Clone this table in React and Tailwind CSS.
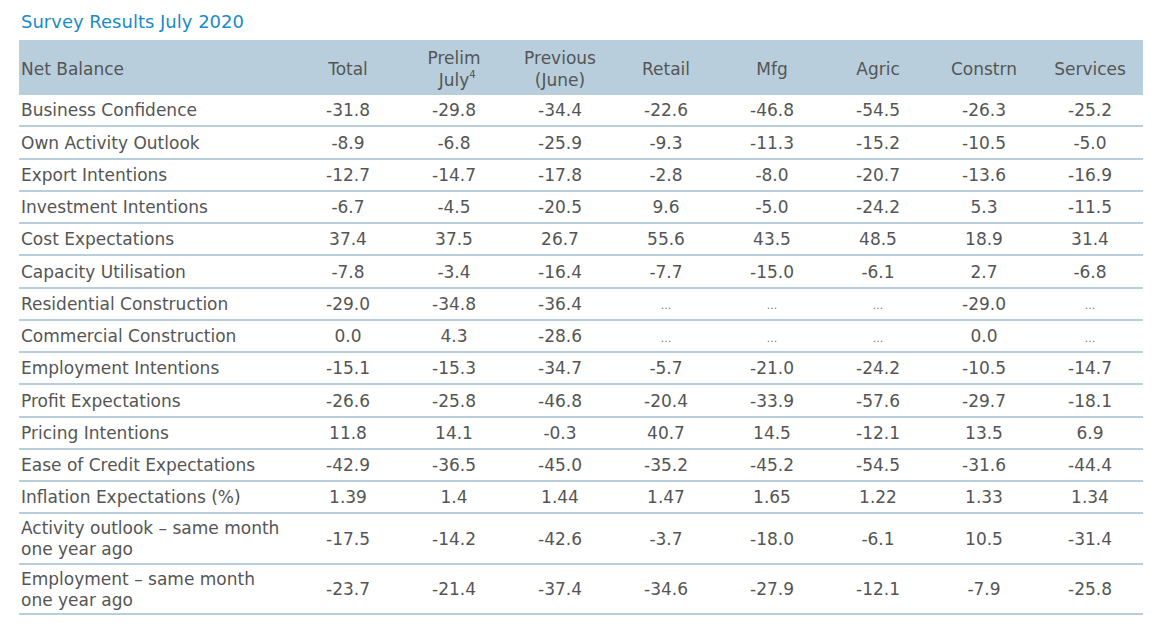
const cols = ['Total', 'Prelim', 'Previous', 'Retail', 'Mfg', 'Agric', 'Constrn', 'Services'];

const rows = [
  ['Business Confidence', '-31.8', '-29.8', '-34.4', '-22.6', '-46.8', '-54.5', '-26.3', '-25.2'],
  ['Own Activity Outlook', '-8.9', '-6.8', '-25.9', '-9.3', '-11.3', '-15.2', '-10.5', '-5.0'],
  ['Export Intentions', '-12.7', '-14.7', '-17.8', '-2.8', '-8.0', '-20.7', '-13.6', '-16.9'],
  ['Investment Intentions', '-6.7', '-4.5', '-20.5', '9.6', '-5.0', '-24.2', '5.3', '-11.5'],
  ['Cost Expectations', '37.4', '37.5', '26.7', '55.6', '43.5', '48.5', '18.9', '31.4'],
  ['Capacity Utilisation', '-7.8', '-3.4', '-16.4', '-7.7', '-15.0', '-6.1', '2.7', '-6.8'],
  ['Residential Construction', '-29.0', '-34.8', '-36.4', '...', '...', '...', '-29.0', '...'],
  ['Commercial Construction', '0.0', '4.3', '-28.6', '...', '...', '...', '0.0', '...'],
  ['Employment Intentions', '-15.1', '-15.3', '-34.7', '-5.7', '-21.0', '-24.2', '-10.5', '-14.7'],
  ['Profit Expectations', '-26.6', '-25.8', '-46.8', '-20.4', '-33.9', '-57.6', '-29.7', '-18.1'],
  ['Pricing Intentions', '11.8', '14.1', '-0.3', '40.7', '14.5', '-12.1', '13.5', '6.9'],
  ['Ease of Credit Expectations', '-42.9', '-36.5', '-45.0', '-35.2', '-45.2', '-54.5', '-31.6', '-44.4'],
  ['Inflation Expectations (%)', '1.39', '1.4', '1.44', '1.47', '1.65', '1.22', '1.33', '1.34'],
];

const tallRows = [
  ['Activity outlook \u2013 same month', 'one year ago', '-17.5', '-14.2', '-42.6', '-3.7', '-18.0', '-6.1', '10.5', '-31.4'],
  ['Employment \u2013 same month', 'one year ago', '-23.7', '-21.4', '-37.4', '-34.6', '-27.9', '-12.1', '-7.9', '-25.8'],
];

function Cell({ value }) {
  if (value === '...') {
    return <div className="flex items-center justify-center pt-[4px] text-[11px] text-[#777]">...</div>;
  }
  return <div className="flex items-center justify-center">{value}</div>;
}

export default function App() {
  return (
    <div
      className="min-h-screen bg-white text-[#555] pl-[19px] pt-[9px]"
      style={{ fontFamily: '"DejaVu Sans", Verdana, sans-serif' }}
    >
      <h1 className="text-[18px] text-[#1a8bc9] pl-[2px] leading-[26px]">Survey Results July 2020</h1>

      <div className="w-[1124px] mt-[5px] text-[17px]">
        <div className="grid grid-cols-[276px_repeat(8,106px)] h-[55px] bg-[#b8cedc] leading-[22px] pt-[2px]">
          <div className="flex items-center pl-[2px]">Net Balance</div>
          <div className="flex items-center justify-center">Total</div>
          <div className="flex flex-col items-center justify-center">
            <span>Prelim</span>
            <span className="relative">
              July<span className="absolute -top-[5px] text-[10px]">4</span>
            </span>
          </div>
          <div className="flex flex-col items-center justify-center">
            <span>Previous</span>
            <span>(June)</span>
          </div>
          {cols.slice(3).map((c) => (
            <div key={c} className="flex items-center justify-center">
              {c}
            </div>
          ))}
        </div>

        {rows.map((r) => (
          <div
            key={r[0]}
            className="grid grid-cols-[276px_repeat(8,106px)] h-[32.25px] border-b-2 border-[#b8cedc] pt-[2px]"
          >
            <div className="flex items-center pl-[2px] whitespace-nowrap">{r[0]}</div>
            {r.slice(1).map((v, i) => (
              <Cell key={i} value={v} />
            ))}
          </div>
        ))}

        {tallRows.map((r) => (
          <div
            key={r[0]}
            className="grid grid-cols-[276px_repeat(8,106px)] h-[50.5px] border-b-2 border-[#b8cedc] leading-[21px] pt-[1px]"
          >
            <div className="flex flex-col justify-center pl-[2px] whitespace-nowrap">
              <span>{r[0]}</span>
              <span>{r[1]}</span>
            </div>
            {r.slice(2).map((v, i) => (
              <Cell key={i} value={v} />
            ))}
          </div>
        ))}
      </div>
    </div>
  );
}
